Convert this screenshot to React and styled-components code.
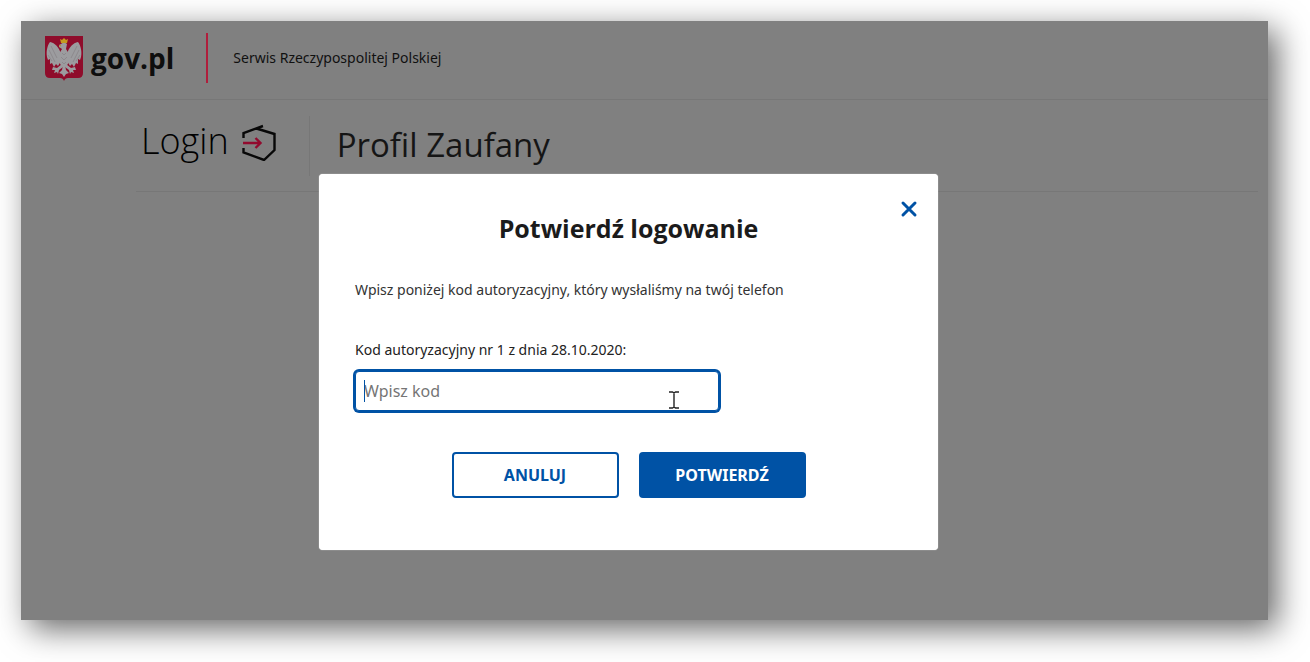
import React, { useState } from "react";
import styled, { createGlobalStyle } from "styled-components";

const GlobalStyle = createGlobalStyle`
    * {
        box-sizing: border-box;
    }

    body {
        margin: 0;
        background: #fff;
        color: #1b1b1b;
        font-family: "Noto Sans", "Open Sans", sans-serif;
    }
`

const Page = styled.div`
    display: flex;
    min-height: 100vh;
    padding: 21px 42px 42px 21px;
`

const Screen = styled.div`
    position: relative;
    flex: 1;
    background: #808080;
    box-shadow: 9px 9px 30px rgba(0, 0, 0, 0.6);
`

const Header = styled.header`
    display: flex;
    align-items: center;
    height: 79px;
    padding: 0 24px;
    border-bottom: 1px solid #777;
`

const Brand = styled.a`
    display: flex;
    align-items: center;
    gap: 8px;
    padding-bottom: 4px;
    color: #0e0e0e;
    font-family: "Open Sans", sans-serif;
    font-size: 28px;
    font-weight: 700;
    line-height: 38px;
    text-decoration: none;
`

const BrandDivider = styled.span`
    width: 2px;
    height: 50px;
    margin: 0 25px 4px 32px;
    background: #b01e3c;
`

const Tagline = styled.span`
    padding-bottom: 4px;
    color: #101010;
    font-size: 14px;
    line-height: 20px;
`

const LoginBar = styled.div`
    display: flex;
    align-items: center;
    height: 92px;
    margin: 0 10px 0 115px;
    padding-left: 5px;
    border-bottom: 1px solid #777;
`

const LoginLogo = styled.div`
    display: flex;
    align-items: center;
    gap: 12px;
    padding-bottom: 8px;
    color: #000;
    font-family: "Open Sans", sans-serif;
    font-size: 36px;
    font-weight: 300;
    line-height: 48px;
`

const LoginText = styled.span`
    padding-bottom: 2px;
`

const BarDivider = styled.span`
    width: 1px;
    height: 60px;
    margin: 0 27px 0 32px;
    background: #777;
`

const PageTitle = styled.h1`
    margin: 0;
    padding-bottom: 2px;
    color: #151515;
    font-family: "Open Sans", sans-serif;
    font-size: 33px;
    font-weight: 400;
    line-height: 46px;
`

const Overlay = styled.div`
    position: absolute;
    inset: 0;
    display: flex;
    justify-content: center;
    align-items: flex-start;
    padding: 153px 32px 0 0;
`

const Modal = styled.section`
    position: relative;
    width: 100%;
    max-width: 619px;
    padding: 36px 36px 52px;
    border-radius: 4px;
    background: #fff;
    box-shadow: 0 0 1px #fff;
`

const CloseButton = styled.button`
    position: absolute;
    top: 22px;
    right: 16px;
    display: flex;
    padding: 4px;
    border: none;
    background: none;
    cursor: pointer;
`

const ModalTitle = styled.h2`
    margin: 0 0 34px;
    font-family: "Open Sans", sans-serif;
    font-size: 25px;
    font-weight: 700;
    line-height: 36px;
    text-align: center;
`

const Hint = styled.p`
    margin: 0 0 40px;
    color: #333;
    font-size: 14px;
    line-height: 20px;
`

const Label = styled.label`
    display: block;
    margin-bottom: 11px;
    color: #222;
    font-size: 14px;
    line-height: 20px;
`

const Field = styled.div`
    position: relative;
    max-width: 364px;
`

const CodeInput = styled.input`
    display: block;
    width: 100%;
    height: 40px;
    padding: 0 8px;
    border: 1px solid #0052a5;
    border-radius: 4px;
    outline: none;
    box-shadow: 0 0 0 2px #0052a5;
    color: #1b1b1b;
    font-family: inherit;
    font-size: 16px;
    caret-color: transparent;

    &::placeholder {
        color: #757575;
        opacity: 1;
    }
`

const Caret = styled.span`
    position: absolute;
    top: 9px;
    left: 9px;
    width: 1px;
    height: 22px;
    background: #0052a5;
`

const Pointer = styled.svg`
    position: absolute;
    top: 20px;
    right: 39px;
    pointer-events: none;
`

const Actions = styled.div`
    display: flex;
    justify-content: center;
    gap: 20px;
    margin-top: 41px;
`

const ActionButton = styled.button`
    width: 167px;
    height: 46px;
    border: 2px solid #0052a5;
    border-radius: 4px;
    background: ${({ $primary }) => ($primary ? "#0052a5" : "#fff")};
    color: ${({ $primary }) => ($primary ? "#fff" : "#0052a5")};
    font-family: inherit;
    font-size: 16px;
    font-weight: 700;
    cursor: pointer;
`

const Crest = () => (
    <svg width="38" height="45" viewBox="0 0 38 45" aria-hidden="true">
        <path d="M0 0H38V37Q38 42 33 42H23Q20 42 19 45Q18 42 15 42H5Q0 42 0 37Z" fill="#8f0c2b" />
        <g fill="#9c9c9f">
            <path d="M16 18C14 11 10 7 5 6C2 10 1 16 2 21L3 24L5 23L5 28L7 27L9 31L11 28L13 30L16 25Z" />
            <path d="M22 18C24 11 28 7 33 6C36 10 37 16 36 21L35 24L33 23L33 28L31 27L29 31L27 28L25 30L22 25Z" />
            <path d="M16 8Q19 5 22 8L21 13L24 18L24 26L21 31H17L14 26L14 18L17 13L14 11L14 9Z" />
            <path d="M17 28L12 32L8 31L7 34L10 34L9 37L12 36L13 38L14 34L18 31Z" />
            <path d="M21 28L26 32L30 31L31 34L28 34L29 37L26 36L25 38L24 34L20 31Z" />
            <path d="M18 29H20L21 34L24 37L21 38L19 41L17 38L14 37L17 34Z" />
        </g>
        <g fill="none" stroke="#7c767b" strokeWidth="0.5">
            <path d="M6 10L12 22M4 14L10 26M3 19L7 25M32 10L26 22M34 14L28 26M35 19L31 25" />
            <path d="M17 17L19 19L21 17M16 21L19 24L22 21M17 26L19 28L21 26" />
        </g>
        <path d="M16 7L15 3L17 4L19 2L21 4L23 3L22 7Z" fill="#c59a1f" />
        <path d="M14 9L16 9L15 11Z" fill="#b98f25" />
    </svg>
)

const LoginIcon = () => (
    <svg width="36" height="38" viewBox="0 0 36 38" fill="none" aria-hidden="true">
        <path d="M2.5 15V10L22 3M15.5 5.5L33.5 11V27L23 37L2.5 29.5V25" stroke="#080808" strokeWidth="2.4" />
        <path d="M2 20H19M14.5 15L19.5 20L14.5 25" stroke="#920a2e" strokeWidth="2.4" />
    </svg>
)

export const App = () => {
    const [code, setCode] = useState("")

    return (
        <Page>
            <GlobalStyle />
            <Screen>
                <Header>
                    <Brand href="#">
                        <Crest />
                        gov.pl
                    </Brand>
                    <BrandDivider />
                    <Tagline>Serwis Rzeczypospolitej Polskiej</Tagline>
                </Header>
                <LoginBar>
                    <LoginLogo>
                        <LoginText>Login</LoginText>
                        <LoginIcon />
                    </LoginLogo>
                    <BarDivider />
                    <PageTitle>Profil Zaufany</PageTitle>
                </LoginBar>
                <Overlay>
                    <Modal role="dialog" aria-modal="true" aria-labelledby="modal-title">
                        <CloseButton type="button" aria-label="Zamknij">
                            <svg width="18" height="18" viewBox="0 0 18 18" aria-hidden="true">
                                <path d="M3 3L15 15M15 3L3 15" stroke="#0052a5" strokeWidth="3" strokeLinecap="round" />
                            </svg>
                        </CloseButton>
                        <ModalTitle id="modal-title">Potwierdź logowanie</ModalTitle>
                        <Hint>Wpisz poniżej kod autoryzacyjny, który wysłaliśmy na twój telefon</Hint>
                        <Label htmlFor="code">Kod autoryzacyjny nr 1 z dnia 28.10.2020:</Label>
                        <Field>
                            <CodeInput
                                id="code"
                                type="text"
                                placeholder="Wpisz kod"
                                value={code}
                                onChange={(e) => setCode(e.target.value)}
                            />
                            {!code && <Caret />}
                            <Pointer width="12" height="18" viewBox="0 0 12 18" fill="none" aria-hidden="true">
                                <path d="M1 1H4.5L6 2L7.5 1H11M6 2V16M1 17H4.5L6 16L7.5 17H11" stroke="#222" strokeWidth="1.4" />
                            </Pointer>
                        </Field>
                        <Actions>
                            <ActionButton type="button">ANULUJ</ActionButton>
                            <ActionButton type="submit" $primary>POTWIERDŹ</ActionButton>
                        </Actions>
                    </Modal>
                </Overlay>
            </Screen>
        </Page>
    )
}

export default App;
